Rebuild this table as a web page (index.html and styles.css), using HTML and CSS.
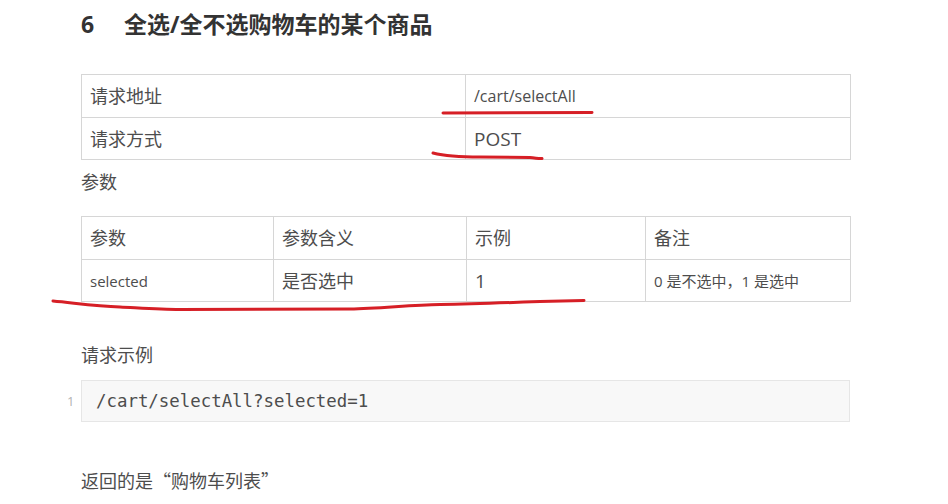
FILE: index.html
```html
<!DOCTYPE html>
<html lang="zh-CN">
<head>
<meta charset="utf-8">
<title>全选/全不选购物车的某个商品</title>
<link rel="stylesheet" href="styles.css">
</head>
<body>
<main class="doc">
  <h2 class="title"><span class="num">6</span>全选/全不选购物车的某个商品</h2>

  <table class="grid req">
    <colgroup>
      <col class="half1">
      <col class="half2">
    </colgroup>
    <tr class="r1">
      <td>请求地址</td>
      <td class="url">/cart/selectAll</td>
    </tr>
    <tr class="r2">
      <td>请求方式</td>
      <td class="big">POST</td>
    </tr>
  </table>

  <p class="para p-params">参数</p>

  <table class="grid params">
    <colgroup>
      <col class="w1">
      <col class="w2">
      <col class="w3">
      <col class="w4">
    </colgroup>
    <tr class="r1">
      <td>参数</td>
      <td>参数含义</td>
      <td>示例</td>
      <td>备注</td>
    </tr>
    <tr class="r2">
      <td class="small">selected</td>
      <td>是否选中</td>
      <td class="big">1</td>
      <td class="note">0 是不选中<span class="cjk">，</span>1 是选中</td>
    </tr>
  </table>

  <p class="para p-example">请求示例</p>

  <div class="code">
    <span class="lineno">1</span>
    <code class="code-text">/cart/selectAll?selected=1</code>
  </div>

  <p class="para p-return">返回的是<span class="cjk">“</span>购物车列表<span class="cjk">”</span></p>
</main>

<svg class="marks" width="948" height="504" viewBox="0 0 948 504" aria-hidden="true">
  <path d="M443 113 L592 112.5" />
  <path d="M433 153 C445 156 460 157 480 157 L530 157.5 C536 158 540 159 542 158.5" />
  <path d="M53 301 C75 303 95 306 120 307 C140 308 160 309.5 180 309.5 L350 309 C380 308.5 410 305 440 304.5 C470 304 500 303 540 301.5 L584 300.5" />
</svg>
</body>
</html>
```

FILE: styles.css
```css
html, body {
  margin: 0;
  padding: 0;
  background: #ffffff;
}

body {
  position: relative;
  width: 948px;
  height: 504px;
  overflow: hidden;
  font-family: "Open Sans", "Noto Sans CJK SC", sans-serif;
  color: #4d4d4d;
}

.cjk {
  font-family: "Noto Sans CJK SC", sans-serif;
}

.doc {
  padding: 8px 0 0 81px;
  width: 769px;
}

.title {
  margin: 0;
  font-size: 23px;
  line-height: 32px;
  font-weight: 700;
  color: #333333;
}

.num {
  display: inline-block;
  width: 43px;
}

.grid {
  border-collapse: collapse;
  width: 769px;
  table-layout: fixed;
}

.grid td {
  box-sizing: border-box;
  border: 1px solid #d6d6d6;
  padding: 0 8px;
  font-size: 18px;
  line-height: 24px;
  vertical-align: middle;
  color: #4d4d4d;
  white-space: nowrap;
}

.grid .r1 td {
  height: 43px;
}

.grid .r2 td {
  height: 42px;
}

.req {
  margin-top: 34px;
}

.half1 { width: 384px; }
.half2 { width: 385px; }

.url {
  font-size: 16px !important;
}

.big {
  font-size: 19px !important;
}

.small {
  font-size: 15px !important;
}

.note {
  font-size: 15px !important;
}

.params .w1 { width: 192px; }
.params .w2 { width: 193px; }
.params .w3 { width: 179px; }
.params .w4 { width: 205px; }

.para {
  margin: 0;
  font-size: 18px;
  line-height: 26px;
  color: #4d4d4d;
}

.p-params {
  margin-top: 9px;
}

.params {
  margin-top: 21px;
}

.p-example {
  margin-top: 40px;
}

.code {
  position: relative;
  margin-top: 12px;
  width: 767px;
  height: 40px;
  background: #f8f8f8;
  border: 1px solid #e6e6e6;
  display: flex;
  align-items: center;
}

.lineno {
  position: absolute;
  left: -15px;
  top: 12px;
  font-family: "Open Sans", sans-serif;
  font-size: 13px;
  line-height: 16px;
  color: #b3b3b3;
}

.code-text {
  margin-left: 14px;
  font-family: "DejaVu Sans Mono", monospace;
  font-size: 17.4px;
  color: #4d4d4d;
}

.p-return {
  margin-top: 45px;
}

.marks {
  position: absolute;
  left: 0;
  top: 0;
  pointer-events: none;
}

.marks path {
  fill: none;
  stroke: #d61f26;
  stroke-width: 3;
  stroke-linecap: round;
  stroke-linejoin: round;
}
```
